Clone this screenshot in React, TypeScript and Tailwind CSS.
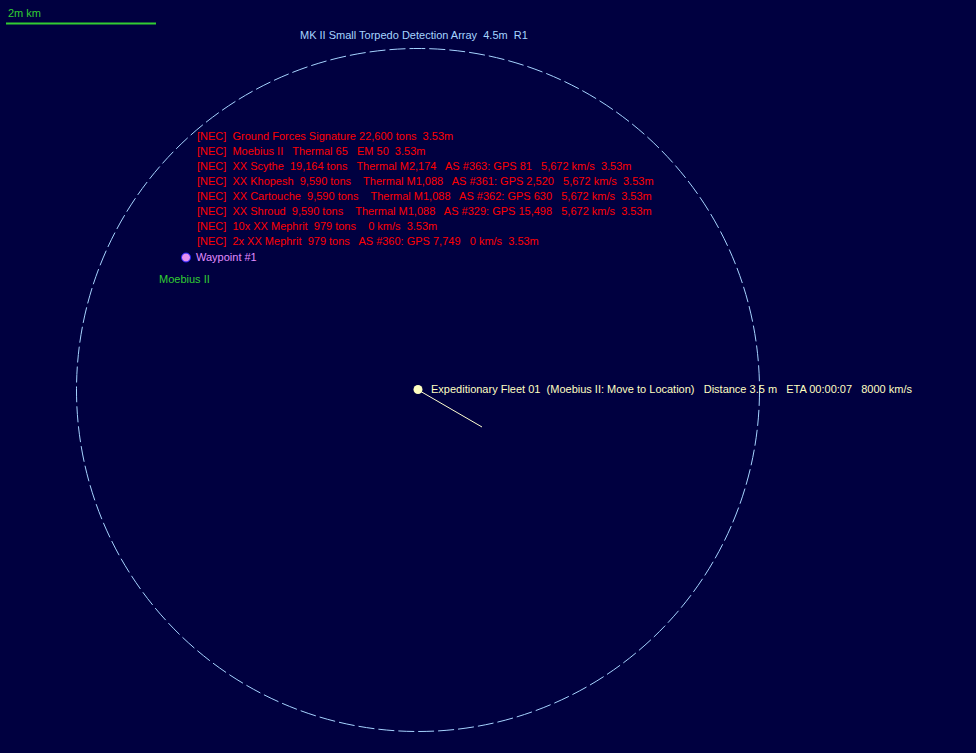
// Tactical map view: sensor ring, contacts and fleet marker
const FONT = "font-['Tahoma','Liberation_Sans',sans-serif] text-[11px] leading-[13px]";

const CONTACTS = [
  "[NEC]  Ground Forces Signature 22,600 tons  3.53m",
  "[NEC]  Moebius II   Thermal 65   EM 50  3.53m",
  "[NEC]  XX Scythe  19,164 tons   Thermal M2,174   AS #363: GPS 81   5,672 km/s  3.53m",
  "[NEC]  XX Khopesh  9,590 tons    Thermal M1,088   AS #361: GPS 2,520   5,672 km/s  3.53m",
  "[NEC]  XX Cartouche  9,590 tons    Thermal M1,088   AS #362: GPS 630   5,672 km/s  3.53m",
  "[NEC]  XX Shroud  9,590 tons    Thermal M1,088   AS #329: GPS 15,498   5,672 km/s  3.53m",
  "[NEC]  10x XX Mephrit  979 tons    0 km/s  3.53m",
  "[NEC]  2x XX Mephrit  979 tons   AS #360: GPS 7,749   0 km/s  3.53m",
];

function Label({ x, y, className, children }: { x: number; y: number; className: string; children: React.ReactNode }) {
  return (
    <div className={`absolute whitespace-pre ${className}`} style={{ left: x, top: y }}>
      {children}
    </div>
  );
}

export default function App() {
  return (
    <div className={`relative h-[753px] w-[976px] overflow-hidden bg-[#000040] ${FONT}`}>
      <svg className="absolute left-0 top-0" width={976} height={753}>
        {/* scale bar */}
        <line x1={6} y1={23.5} x2={156} y2={23.5} stroke="#32cd32" strokeWidth={2} />
        {/* sensor range */}
        <circle cx={418} cy={390} r={341.5} fill="none" stroke="#a6d4ff" strokeWidth={1} strokeDasharray="16 4" />
        {/* fleet heading */}
        <line x1={420} y1={391} x2={482} y2={427} stroke="#ffffd0" strokeWidth={1} />
        <circle cx={418} cy={389.5} r={4.5} fill="#ffffc0" />
        {/* waypoint */}
        <circle cx={186} cy={257.5} r={4.5} fill="#e58ef0" stroke="#2020ff" strokeWidth={1} />
      </svg>

      <Label x={8} y={7} className="text-[#32cd32]">2m km</Label>
      <Label x={300} y={29} className="text-[#a6d4ff]">MK II Small Torpedo Detection Array  4.5m  R1</Label>

      <div className="absolute left-[197px] top-[129.5px] flex flex-col gap-[2.15px] text-[#ff0000]">
        {CONTACTS.map((c) => (
          <div key={c} className="whitespace-pre">{c}</div>
        ))}
      </div>

      <Label x={196} y={251} className="text-[#e08cff]">Waypoint #1</Label>
      <Label x={159} y={273} className="text-[#32cd32]">Moebius II</Label>
      <Label x={431} y={383} className="text-[#ffffc0]">
        Expeditionary Fleet 01  (Moebius II: Move to Location)   Distance 3.5 m   ETA 00:00:07   8000 km/s
      </Label>
    </div>
  );
}
